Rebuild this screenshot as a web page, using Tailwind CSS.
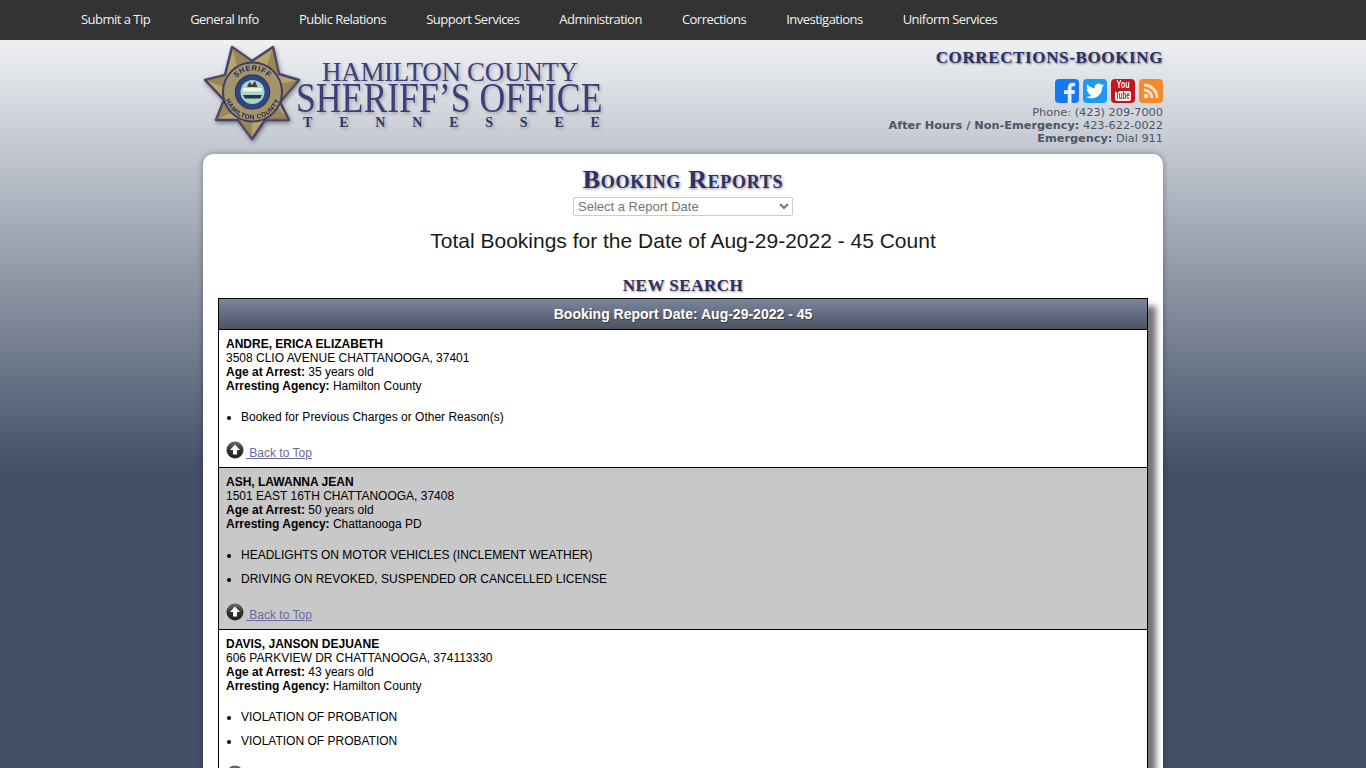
<!DOCTYPE html>
<html lang="en">
<head>
<meta charset="utf-8">
<title>Booking Reports</title>
<script src="https://cdn.jsdelivr.net/npm/@tailwindcss/browser@4"></script>
</head>
<body class="h-[768px] overflow-hidden font-['Liberation_Sans',Arial,sans-serif] text-xs leading-[14px] text-black bg-[#435068]">
<nav class="h-10 bg-[#333333] flex pl-[61px] font-['Open_Sans',sans-serif] text-[13px] leading-[39px] tracking-[-0.52px] text-[#f2f2f2]">
  <a class="px-5">Submit a Tip</a><a class="px-5">General Info</a><a class="px-5">Public Relations</a><a class="px-5">Support Services</a><a class="px-5">Administration</a><a class="px-5">Corrections</a><a class="px-5">Investigations</a><a class="px-5">Uniform Services</a>
</nav>
<div class="bg-[linear-gradient(to_bottom,#eef0f3_0px,#435068_430px)] bg-no-repeat h-[728px]">
  <div class="w-[960px] ml-[203px]">
    <header class="h-[114px] flex justify-between">
      <div class="flex items-start">
        <svg width="110" height="110" viewBox="0 0 110 110" class="shrink-0 -ml-[3px] [filter:drop-shadow(1px_2px_2px_rgba(0,0,0,.4))]">
          <defs>
            <path id="arcTop" d="M31 52 A21.500 21.500 0 0 1 74 52"/>
            <path id="arcBot" d="M25 46 A28 28 0 1 0 80 46"/>
            <linearGradient id="gloss" x1="0" y1="0" x2="0" y2="1"><stop offset="0" stop-color="#6e6e6e"/><stop offset=".5" stop-color="#333"/><stop offset="1" stop-color="#1f1f1f"/></linearGradient>
          </defs>
          <polygon points="32,7 52,21 73,7 79,34 99,40 80,62 89,80 65,80 52,99 38,80 16,80 24,60 5,40 25,35" fill="#b9a56b" stroke="#46426e" stroke-width="2.500" stroke-linejoin="round"/>
          <g fill="#7a6a42" opacity=".5">
            <polygon points="32,7 52,21 38,30"/><polygon points="73,7 79,34 66,28"/><polygon points="99,40 80,62 78,44"/><polygon points="89,80 65,80 76,66"/><polygon points="52,99 38,80 52,82"/><polygon points="16,80 24,60 32,72"/><polygon points="5,40 25,35 26,48"/>
          </g>
          <circle cx="52.500" cy="52" r="29.500" fill="#a3956a" stroke="#403c68" stroke-width="2"/>
          <circle cx="52.500" cy="52" r="17" fill="#2a4a86" stroke="#3a3766" stroke-width="1.500"/>
          <circle cx="52.500" cy="52" r="12" fill="#a9d4c6"/>
          <rect x="43" y="48" width="19" height="3.500" fill="#f2f2ea"/>
          <path d="M43 55h19l-2 3.500h-15z" fill="#26354f"/>
          <path d="M47 47l2.500-5 2.500 3 3-4 2.500 6z" fill="#33413f"/>
          <text font-family="'Liberation Sans',sans-serif" font-size="7.500" font-weight="700" fill="#26244d" letter-spacing=".6"><textPath href="#arcTop" startOffset="50%" text-anchor="middle">SHERIFF</textPath></text>
          <text font-family="'Liberation Sans',sans-serif" font-size="6.500" font-weight="700" fill="#26244d" letter-spacing=".5"><textPath href="#arcBot" startOffset="50%" text-anchor="middle">HAMILTON COUNTY</textPath></text>
        </svg>
        <div class="-ml-[14px] w-[306px] pt-[21px] font-['Liberation_Serif',serif] text-[#3d4075] [text-shadow:2px_2px_3px_rgba(60,60,100,.3)]">
          <div class="pl-[26px] text-[27px] leading-[23px] tracking-[-0.3px] whitespace-nowrap">HAMILTON COUNTY</div>
          <div class="text-[43px] leading-[28px] whitespace-nowrap origin-left scale-x-[0.83]">SHERIFF’S OFFICE</div>
          <div class="flex justify-between pl-[7px] pr-[2px] mt-1 text-[14px] leading-[14px] font-bold text-[#33365f]"><span>T</span><span>E</span><span>N</span><span>N</span><span>E</span><span>S</span><span>S</span><span>E</span><span>E</span></div>
        </div>
      </div>
      <div class="text-right pt-2 font-['DejaVu_Sans',Verdana,sans-serif] text-[#4a5568] text-[11.3px] leading-[13px]">
        <h2 class="font-['Liberation_Serif',serif] font-bold text-[17px] leading-[19px] tracking-[0.63px] text-[#2f305f] [text-shadow:1px_1px_2px_rgba(50,50,90,.6)]">CORRECTIONS-BOOKING</h2>
        <div class="flex justify-end gap-1 mt-[12px] mb-[3px]">
          <span class="w-6 h-6 rounded bg-[#1877f2] overflow-hidden flex items-end justify-center">
            <svg width="24" height="24" viewBox="0 0 24 24"><path fill="#e8eef8" d="M16.500 24v-9h3l.6-3.700h-3.600V9c0-1.100.4-1.800 1.900-1.800h1.800V4c-.4-.1-1.500-.2-2.700-.2-2.900 0-4.700 1.700-4.700 4.800v2.700H9V15h3.800v9z"/></svg>
          </span>
          <span class="w-6 h-6 rounded bg-[#1d9bf0] flex items-center justify-center">
            <svg width="18" height="18" viewBox="0 0 24 24"><path fill="#fff" d="M23.953 4.57a10 10 0 01-2.825.775 4.958 4.958 0 002.163-2.723c-.951.555-2.005.959-3.127 1.184a4.92 4.92 0 00-8.384 4.482C7.69 8.095 4.067 6.13 1.64 3.162a4.822 4.822 0 00-.666 2.475c0 1.71.87 3.213 2.188 4.096a4.904 4.904 0 01-2.228-.616v.06a4.923 4.923 0 003.946 4.827 4.996 4.996 0 01-2.212.085 4.936 4.936 0 004.604 3.417 9.867 9.867 0 01-6.102 2.105c-.39 0-.779-.023-1.17-.067a13.995 13.995 0 007.557 2.209c9.053 0 13.998-7.496 13.998-13.985 0-.21 0-.42-.015-.63A9.935 9.935 0 0024 4.59z"/></svg>
          </span>
          <span class="w-6 h-6 rounded bg-[#c4161c] flex flex-col items-center pt-[1px] font-['Liberation_Sans',sans-serif] font-bold text-[10px] leading-[10px] text-white">
            <span class="scale-x-[0.72]">You</span>
            <span class="mt-[1px] w-[16px] h-[10px] flex justify-center bg-white rounded-[2px] text-[#c4161c]"><span class="scale-x-[0.62]">Tube</span></span>
          </span>
          <span class="w-6 h-6 rounded bg-[#f58a2a] flex items-center justify-center">
            <svg width="18" height="18" viewBox="0 0 18 18" fill="none" stroke="#fbe3c8" stroke-width="2.800"><circle cx="4" cy="14" r="2.300" fill="#fbe3c8" stroke="none"/><path d="M2 8a8 8 0 0 1 8 8"/><path d="M2 3a13 13 0 0 1 13 13"/></svg>
          </span>
        </div>
        <p>Phone: (423) 209-7000</p>
        <p><b>After Hours / Non-Emergency:</b> 423-622-0022</p>
        <p><b>Emergency:</b> Dial 911</p>
      </div>
    </header>
    <main class="bg-white rounded-t-[10px] shadow-[0_0_6px_rgba(0,0,0,.35)] px-[15px] pt-[10px] pb-6">
      <h1 class="text-center font-['Liberation_Serif',serif] font-bold [font-variant:small-caps] text-[26px] leading-[31px] tracking-[0.7px] text-[#2f305f] [text-shadow:1px_1px_3px_rgba(50,50,90,.6)]">Booking Reports</h1>
      <div class="flex justify-center mt-[2px]">
        <select class="w-[220px] h-[19px] border border-[#cccccc] rounded-[2px] bg-white text-[13px] leading-[15px] text-[#757575] pb-[1px] font-['Liberation_Sans',Arial,sans-serif]">
          <option>Select a Report Date</option>
        </select>
      </div>
      <p class="text-center text-[21px] leading-[24px] mt-[13px] text-[#1a1a1a]">Total Bookings for the Date of Aug-29-2022 - 45 Count</p>
      <h3 class="text-center font-['Liberation_Serif',serif] font-bold text-[17px] leading-[20px] tracking-[0.5px] mt-[23px] mb-[2px] text-[#2f305f] [text-shadow:1px_1px_2px_rgba(50,50,90,.55)]">NEW SEARCH</h3>
      <section class="border border-black shadow-[8px_8px_6px_rgba(0,0,0,.55)]">
        <div class="h-[31px] border-b border-black bg-[linear-gradient(to_bottom,#7c869c,#4b5364)] text-center text-white font-bold text-sm leading-[30px] [text-shadow:1px_1px_1px_rgba(0,0,0,.4)]">Booking Report Date: Aug-29-2022 - 45</div>

        <article class="h-[138px] bg-white border-b border-black pt-[7px] px-[7px]">
          <p class="font-bold">ANDRE, ERICA ELIZABETH</p>
          <p>3508 CLIO AVENUE CHATTANOOGA, 37401</p>
          <p><b>Age at Arrest:</b> 35 years old</p>
          <p><b>Arresting Agency:</b> Hamilton County</p>
          <ul class="list-disc pl-[15px] my-3 [&>li]:py-[5px]">
            <li>Booked for Previous Charges or Other Reason(s)</li>
          </ul>
          <a class="flex items-start h-5 text-[#6a6a9c] underline">
            <svg width="18" height="18" viewBox="0 0 18 18" class="shrink-0"><circle cx="9" cy="9" r="8.500" fill="url(#gloss)"/><path d="M9 3.500 14 9h-3v4.500H7V9H4z" fill="#fff"/></svg>
            <span class="ml-[2px] pt-[5px] underline">&nbsp;Back to Top</span>
          </a>
        </article>

        <article class="h-[162px] bg-[#c8c8c8] border-b border-black pt-[7px] px-[7px]">
          <p class="font-bold">ASH, LAWANNA JEAN</p>
          <p>1501 EAST 16TH CHATTANOOGA, 37408</p>
          <p><b>Age at Arrest:</b> 50 years old</p>
          <p><b>Arresting Agency:</b> Chattanooga PD</p>
          <ul class="list-disc pl-[15px] my-3 [&>li]:py-[5px]">
            <li>HEADLIGHTS ON MOTOR VEHICLES (INCLEMENT WEATHER)</li>
            <li>DRIVING ON REVOKED, SUSPENDED OR CANCELLED LICENSE</li>
          </ul>
          <a class="flex items-start h-5 text-[#6a6a9c] underline">
            <svg width="18" height="18" viewBox="0 0 18 18" class="shrink-0"><circle cx="9" cy="9" r="8.500" fill="url(#gloss)"/><path d="M9 3.500 14 9h-3v4.500H7V9H4z" fill="#fff"/></svg>
            <span class="ml-[2px] pt-[5px] underline">&nbsp;Back to Top</span>
          </a>
        </article>

        <article class="h-[162px] bg-white border-b border-black pt-[7px] px-[7px]">
          <p class="font-bold">DAVIS, JANSON DEJUANE</p>
          <p>606 PARKVIEW DR CHATTANOOGA, 374113330</p>
          <p><b>Age at Arrest:</b> 43 years old</p>
          <p><b>Arresting Agency:</b> Hamilton County</p>
          <ul class="list-disc pl-[15px] my-3 [&>li]:py-[5px]">
            <li>VIOLATION OF PROBATION</li>
            <li>VIOLATION OF PROBATION</li>
          </ul>
          <a class="flex items-start h-5 text-[#6a6a9c] underline">
            <svg width="18" height="18" viewBox="0 0 18 18" class="shrink-0"><circle cx="9" cy="9" r="8.500" fill="url(#gloss)"/><path d="M9 3.500 14 9h-3v4.500H7V9H4z" fill="#fff"/></svg>
            <span class="ml-[2px] pt-[5px] underline">&nbsp;Back to Top</span>
          </a>
        </article>
      </section>
    </main>
  </div>
</div>
</body>
</html>
